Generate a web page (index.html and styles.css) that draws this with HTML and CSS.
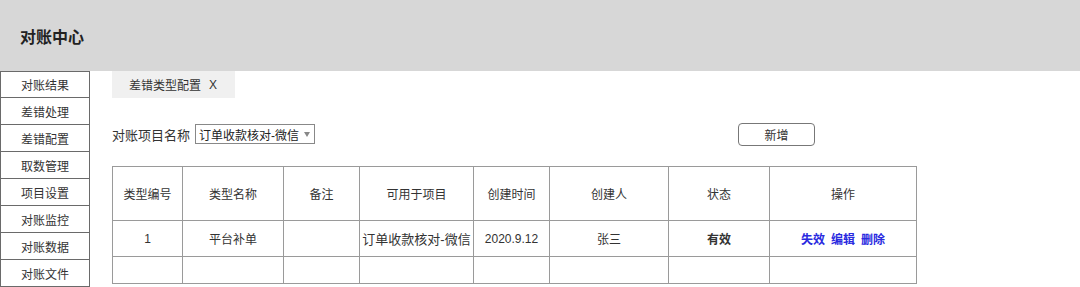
FILE: index.html
```html
<!DOCTYPE html>
<html lang="zh-CN">
<head>
<meta charset="utf-8">
<title>对账中心</title>
<link rel="stylesheet" href="styles.css">
</head>
<body>
<header class="topbar"><h1 class="title">对账中心</h1></header>
<div class="layout">
  <nav class="sidebar">
    <div class="nav-item">对账结果</div>
    <div class="nav-item">差错处理</div>
    <div class="nav-item">差错配置</div>
    <div class="nav-item">取数管理</div>
    <div class="nav-item">项目设置</div>
    <div class="nav-item">对账监控</div>
    <div class="nav-item">对账数据</div>
    <div class="nav-item">对账文件</div>
  </nav>
  <main class="content">
    <div class="tab">差错类型配置<span class="tab-close">X</span></div>
    <div class="filter">
      <span class="filter-label">对账项目名称</span>
      <div class="select"><span>订单收款核对-微信</span><span class="caret"></span></div>
      <button class="btn-add">新增</button>
    </div>
    <table class="grid">
      <colgroup>
        <col class="c1"><col class="c2"><col class="c3"><col class="c4"><col class="c5"><col class="c6"><col class="c7"><col class="c8">
      </colgroup>
      <thead>
        <tr class="head-row"><th>类型编号</th><th>类型名称</th><th>备注</th><th>可用于项目</th><th>创建时间</th><th>创建人</th><th>状态</th><th>操作</th></tr>
      </thead>
      <tbody>
        <tr class="data-row"><td>1</td><td>平台补单</td><td></td><td class="project">订单收款核对-微信</td><td>2020.9.12</td><td>张三</td><td class="status">有效</td><td class="ops"><a>失效</a><a>编辑</a><a>删除</a></td></tr>
        <tr class="empty-row"><td></td><td></td><td></td><td></td><td></td><td></td><td></td><td></td></tr>
      </tbody>
    </table>
  </main>
</div>
</body>
</html>
```
FILE: styles.css
```css
* { box-sizing: border-box; }
html, body { margin: 0; padding: 0; }
body {
  width: 1080px;
  height: 287px;
  overflow: hidden;
  background: #fff;
  color: #333;
  font-family: "Liberation Sans", "Noto Sans CJK SC", sans-serif;
  font-size: 12px;
}
.topbar {
  height: 71px;
  background: #d7d7d7;
  display: flex;
  align-items: center;
  padding-left: 20px;
}
.title {
  margin: 0;
  font-size: 16px;
  font-weight: bold;
  color: #222;
}
.layout { display: flex; }
.sidebar {
  width: 90px;
  border-left: 1px solid #6a6a6a;
  border-right: 1px solid #6a6a6a;
  flex: none;
}
.nav-item {
  height: 27px;
  border-bottom: 1px solid #6a6a6a;
  display: flex;
  align-items: center;
  justify-content: center;
  font-size: 12px;
  color: #333;
}
.nav-item:first-child { border-top: 1px solid #6a6a6a; }
.content {
  padding-left: 22px;
  flex: 1;
}
.tab {
  width: 123px;
  height: 27px;
  background: #f0f0f0;
  display: flex;
  align-items: center;
  padding-left: 17px;
  font-size: 12px;
  color: #333;
}
.tab-close { margin-left: 8px; }
.filter {
  display: flex;
  align-items: center;
  margin-top: 24px;
  height: 24px;
}
.filter-label { font-size: 13px; color: #333; margin-right: 5px; }
.select {
  width: 120px;
  height: 20px;
  border: 1px solid #888;
  display: flex;
  align-items: center;
  justify-content: space-between;
  padding: 0 4px 0 3px;
  font-size: 12px;
  color: #222;
}
.caret {
  width: 0; height: 0;
  border-left: 3.5px solid transparent;
  border-right: 3.5px solid transparent;
  border-top: 5px solid #888;
}
.btn-add {
  margin-left: 423px;
  width: 77px;
  height: 23px;
  border: 1px solid #777;
  border-radius: 4px;
  background: #fff;
  font-family: inherit;
  font-size: 12px;
  color: #333;
  padding: 0;
}
.grid {
  margin-top: 20px;
  border-collapse: collapse;
  table-layout: fixed;
  width: 804px;
}
.grid th, .grid td {
  border: 1px solid #9a9a9a;
  text-align: center;
  font-weight: normal;
  font-size: 12px;
  color: #333;
  padding: 0;
}
.c1 { width: 70px; } .c2 { width: 101px; } .c3 { width: 76px; } .c4 { width: 114px; }
.c5 { width: 76px; } .c6 { width: 119px; } .c7 { width: 101px; } .c8 { width: 147px; }
.head-row { height: 54px; }
.data-row { height: 36px; }
.empty-row { height: 27px; }
.grid td.project { font-size: 13px; white-space: nowrap; }
.grid td.status { font-weight: bold; color: #333; }
.ops a { color: #2a2ae0; font-weight: bold; margin: 0 3px; cursor: pointer; }
```
